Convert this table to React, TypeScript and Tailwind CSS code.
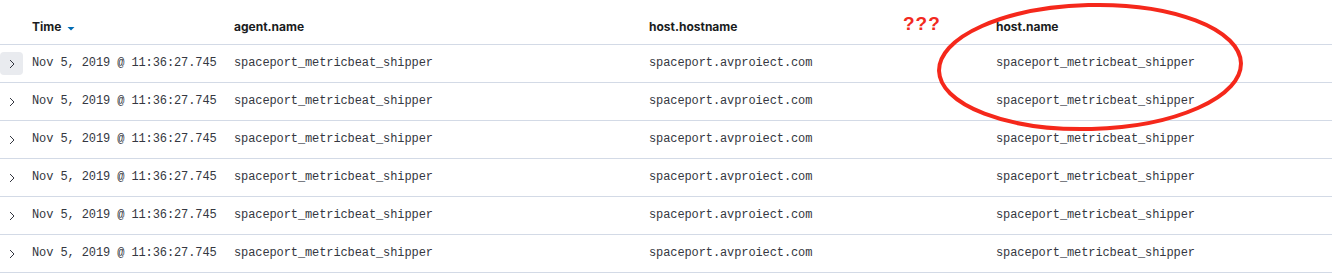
import React from "react";

const rows = Array.from({ length: 6 }, (_, i) => ({
	id: i,
	time: "Nov 5, 2019 @ 11:36:27.745",
	agent: "spaceport_metricbeat_shipper",
	hostname: "spaceport.avproiect.com",
	host: "spaceport_metricbeat_shipper",
}));

const cols = "grid grid-cols-[24px_202px_415px_347px_1fr]";

const Chevron = () => (
	<svg width="16" height="16" viewBox="0 0 16 16" className="text-[#343741]">
		<path d="M6 4l4 4-4 4" fill="none" stroke="currentColor" strokeWidth="1" />
	</svg>
);

export default function App() {
	return (
		<div className="relative w-[1332px] h-[273px] bg-white overflow-hidden font-['Inter',sans-serif]">
			<div className={`${cols} h-[45px] items-center border-b border-[#d3dae6] text-[12px] font-bold text-[#1a1c21]`}>
				<div />
				<div className="px-2 pt-[10px] flex items-center gap-[6px]">
					Time
					<svg width="8" height="6" viewBox="0 0 8 6" className="mt-[3px]">
						<path d="M0.5 1h7L4 4.5z" fill="#006bb4" />
					</svg>
				</div>
				<div className="px-2 pt-[10px]">agent.name</div>
				<div className="px-2 pt-[10px]">host.hostname</div>
				<div className="px-2 pt-[10px]">host.name</div>
			</div>
			{rows.map((row) => (
				<div
					key={row.id}
					className={`${cols} h-[38px] items-center border-b border-[#d3dae6] text-[12px] text-[#343741] font-['Liberation_Mono',monospace]`}
				>
					<div className="flex">
						<div
							className={
								row.id === 0
									? "w-[23px] h-[23px] rounded-[4px] bg-[#e9ebef] flex items-center justify-center"
									: "w-[23px] h-[23px] flex items-center justify-center"
							}
						>
							<Chevron />
						</div>
					</div>
					<div className="px-2 pb-[2px] tracking-[-0.1px]">{row.time}</div>
					<div className="px-2 pb-[2px] tracking-[-0.1px]">{row.agent}</div>
					<div className="px-2 pb-[2px] tracking-[-0.1px]">{row.hostname}</div>
					<div className="px-2 pb-[2px] tracking-[-0.1px]">{row.host}</div>
				</div>
			))}
			<div className="absolute left-[903px] top-[13px] text-[19px] leading-[22px] font-bold tracking-[1px] text-[#f22a1f] font-['Liberation_Sans',sans-serif]">
				???
			</div>
			<svg className="absolute left-0 top-0 pointer-events-none" width="1332" height="273">
				<ellipse
					cx="1090"
					cy="67"
					rx="151"
					ry="62"
					transform="rotate(-1.5 1090 67)"
					fill="none"
					stroke="#f5281b"
					strokeWidth="4"
				/>
			</svg>
		</div>
	);
}
